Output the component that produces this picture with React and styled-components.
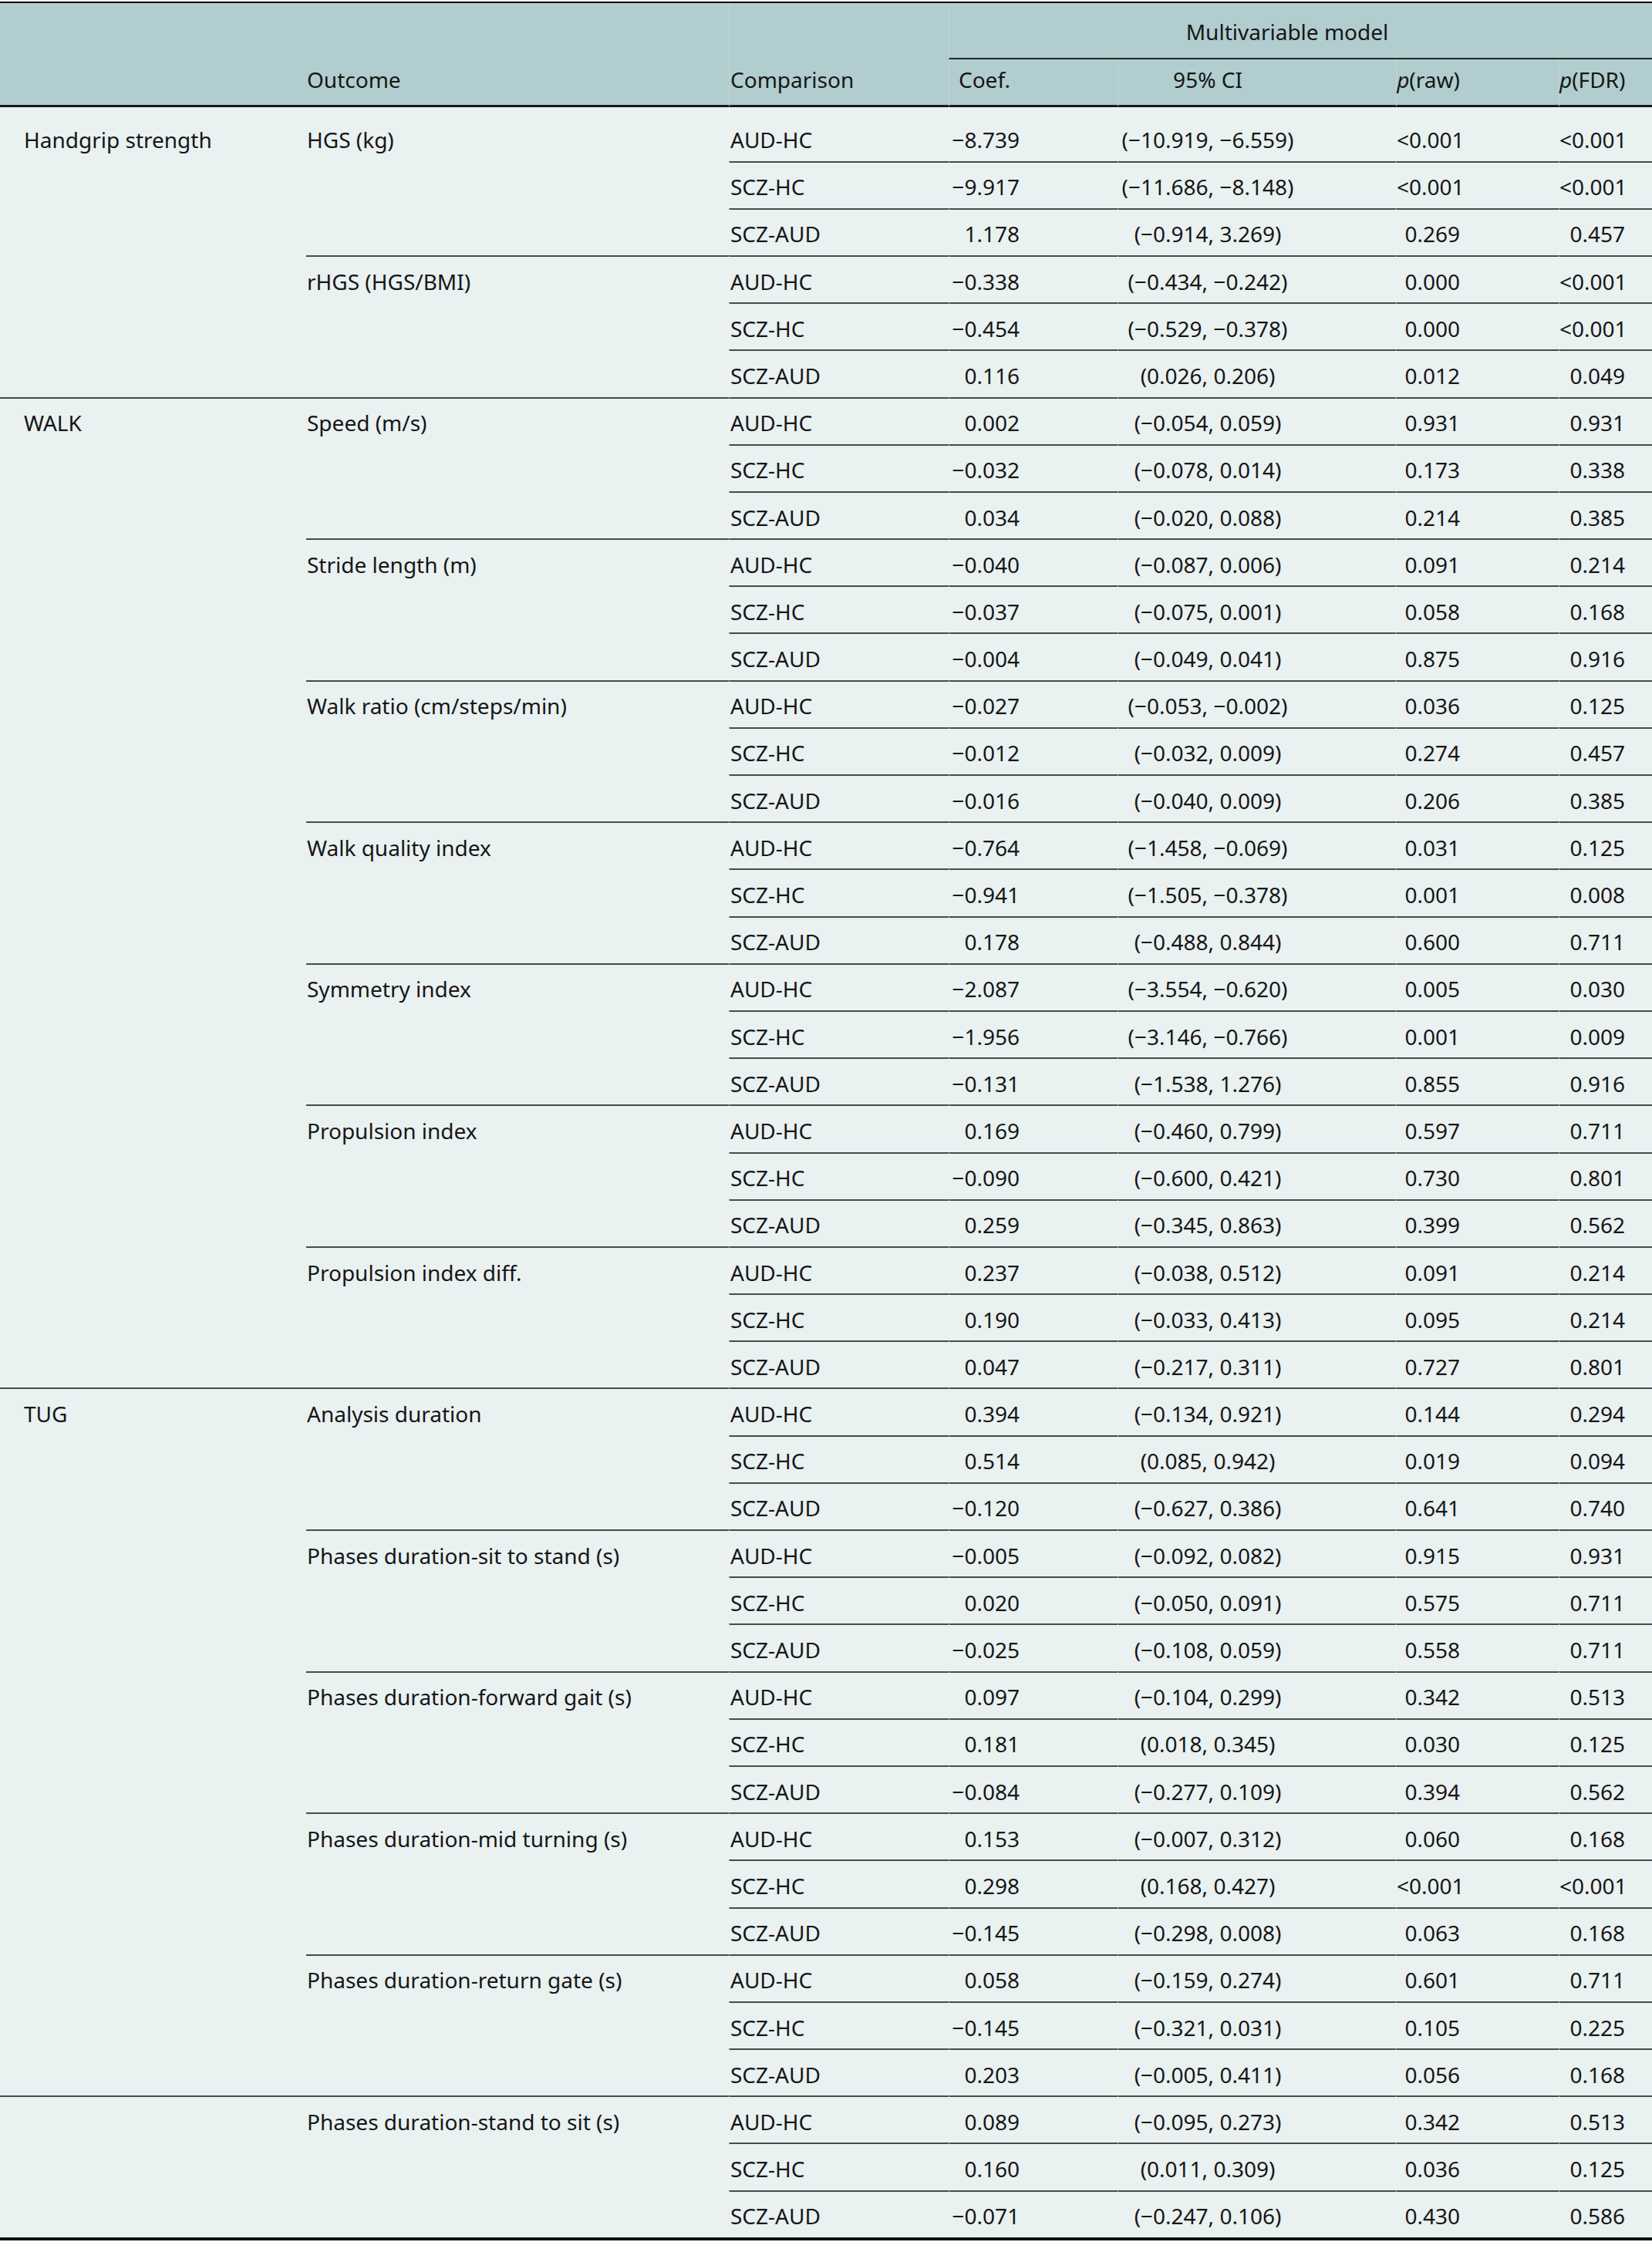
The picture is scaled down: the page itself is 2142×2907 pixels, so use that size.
import React from 'react';
import styled, { createGlobalStyle, css } from 'styled-components';

const GlobalStyle = createGlobalStyle`
  html, body { margin: 0; padding: 0; background: #ffffff; }
  body {
    font-family: "Noto Sans", "Open Sans", "DejaVu Sans", sans-serif;
    color: #161616;
  }
`;

const HEAD_BG = '#b1cdcf';
const BODY_BG = '#e9f1f1';
const RULE = '#4a4a4a';
const FAINT = 'rgba(255,255,255,0.18)';

const Frame = styled.div`
  padding-top: 2px;
  width: 2142px;
`;

const Table = styled.table`
  width: 2142px;
  table-layout: fixed;
  border-collapse: separate;
  border-spacing: 0;
  border-top: 2px solid #0c0c0c;
  border-bottom: 4px solid #111111;
  font-size: 28px;
  line-height: 30px;
`;

const Head = styled.thead`
  background: ${HEAD_BG};
`;

const Body = styled.tbody`
  background: ${BODY_BG};
`;

/* column specification: width, left padding, right padding, alignment */
const COLS = [
  { w: 397, pl: 31, pr: 0, align: 'left', body: 'left' },
  { w: 548, pl: 1, pr: 0, align: 'left', body: 'left' },
  { w: 285, pl: 1, pr: 0, align: 'left', body: 'left' },
  { w: 219, pl: 0, pr: 127, align: 'center', body: 'right' },
  { w: 361, pl: 0, pr: 128, align: 'center', body: 'center' },
  { w: 211, pl: 0, pr: 128, align: 'center', body: 'right' },
  { w: 121, pl: 0, pr: 35, align: 'center', body: 'right' },
];

const colBox = css`
  padding-left: ${(p) => COLS[p.$col].pl}px;
  padding-right: ${(p) => COLS[p.$col].pr}px;
  border-left: ${(p) => (p.$col >= 2 ? `1px solid ${FAINT}` : 'none')};
`;

const HeadGroupCell = styled.th`
  font-weight: 400;
  text-align: center;
  vertical-align: middle;
  padding: 21.5px 35px 19.5px 0;
  border-left: 1px solid ${FAINT};
  border-bottom: 2px solid #262626;
`;

const HeadCell = styled.th`
  ${colBox};
  font-weight: 400;
  text-align: ${(p) => COLS[p.$col].align};
  vertical-align: bottom;
  padding-top: 11px;
  padding-bottom: 18px;
  border-bottom: 3px solid #1a1a1a;
  white-space: nowrap;
`;

const Cell = styled.td`
  ${colBox};
  text-align: ${(p) => COLS[p.$col].body};
  vertical-align: top;
  padding-top: ${(p) => (p.$first ? 27 : 16.6)}px;
  padding-bottom: 12.6px;
  border-top: ${(p) => (p.$first ? 'none' : `2px solid ${RULE}`)};
  white-space: nowrap;
`;

const Ital = styled.i`
  font-style: italic;
`;

const M = '\u2212';
const n = (s) => s.replace(/-/g, M);

const DATA = [
  {
    cat: 'Handgrip strength',
    outcomes: [
      ['HGS (kg)', [
        ['-8.739', '(-10.919, -6.559)', '<0.001', '<0.001'],
        ['-9.917', '(-11.686, -8.148)', '<0.001', '<0.001'],
        ['1.178', '(-0.914, 3.269)', '0.269', '0.457'],
      ]],
      ['rHGS (HGS/BMI)', [
        ['-0.338', '(-0.434, -0.242)', '0.000', '<0.001'],
        ['-0.454', '(-0.529, -0.378)', '0.000', '<0.001'],
        ['0.116', '(0.026, 0.206)', '0.012', '0.049'],
      ]],
    ],
  },
  {
    cat: 'WALK',
    outcomes: [
      ['Speed (m/s)', [
        ['0.002', '(-0.054, 0.059)', '0.931', '0.931'],
        ['-0.032', '(-0.078, 0.014)', '0.173', '0.338'],
        ['0.034', '(-0.020, 0.088)', '0.214', '0.385'],
      ]],
      ['Stride length (m)', [
        ['-0.040', '(-0.087, 0.006)', '0.091', '0.214'],
        ['-0.037', '(-0.075, 0.001)', '0.058', '0.168'],
        ['-0.004', '(-0.049, 0.041)', '0.875', '0.916'],
      ]],
      ['Walk ratio (cm/steps/min)', [
        ['-0.027', '(-0.053, -0.002)', '0.036', '0.125'],
        ['-0.012', '(-0.032, 0.009)', '0.274', '0.457'],
        ['-0.016', '(-0.040, 0.009)', '0.206', '0.385'],
      ]],
      ['Walk quality index', [
        ['-0.764', '(-1.458, -0.069)', '0.031', '0.125'],
        ['-0.941', '(-1.505, -0.378)', '0.001', '0.008'],
        ['0.178', '(-0.488, 0.844)', '0.600', '0.711'],
      ]],
      ['Symmetry index', [
        ['-2.087', '(-3.554, -0.620)', '0.005', '0.030'],
        ['-1.956', '(-3.146, -0.766)', '0.001', '0.009'],
        ['-0.131', '(-1.538, 1.276)', '0.855', '0.916'],
      ]],
      ['Propulsion index', [
        ['0.169', '(-0.460, 0.799)', '0.597', '0.711'],
        ['-0.090', '(-0.600, 0.421)', '0.730', '0.801'],
        ['0.259', '(-0.345, 0.863)', '0.399', '0.562'],
      ]],
      ['Propulsion index diff.', [
        ['0.237', '(-0.038, 0.512)', '0.091', '0.214'],
        ['0.190', '(-0.033, 0.413)', '0.095', '0.214'],
        ['0.047', '(-0.217, 0.311)', '0.727', '0.801'],
      ]],
    ],
  },
  {
    cat: 'TUG',
    outcomes: [
      ['Analysis duration', [
        ['0.394', '(-0.134, 0.921)', '0.144', '0.294'],
        ['0.514', '(0.085, 0.942)', '0.019', '0.094'],
        ['-0.120', '(-0.627, 0.386)', '0.641', '0.740'],
      ]],
      ['Phases duration-sit to stand (s)', [
        ['-0.005', '(-0.092, 0.082)', '0.915', '0.931'],
        ['0.020', '(-0.050, 0.091)', '0.575', '0.711'],
        ['-0.025', '(-0.108, 0.059)', '0.558', '0.711'],
      ]],
      ['Phases duration-forward gait (s)', [
        ['0.097', '(-0.104, 0.299)', '0.342', '0.513'],
        ['0.181', '(0.018, 0.345)', '0.030', '0.125'],
        ['-0.084', '(-0.277, 0.109)', '0.394', '0.562'],
      ]],
      ['Phases duration-mid turning (s)', [
        ['0.153', '(-0.007, 0.312)', '0.060', '0.168'],
        ['0.298', '(0.168, 0.427)', '<0.001', '<0.001'],
        ['-0.145', '(-0.298, 0.008)', '0.063', '0.168'],
      ]],
      ['Phases duration-return gate (s)', [
        ['0.058', '(-0.159, 0.274)', '0.601', '0.711'],
        ['-0.145', '(-0.321, 0.031)', '0.105', '0.225'],
        ['0.203', '(-0.005, 0.411)', '0.056', '0.168'],
      ]],
    ],
  },
  {
    cat: '',
    outcomes: [
      ['Phases duration-stand to sit (s)', [
        ['0.089', '(-0.095, 0.273)', '0.342', '0.513'],
        ['0.160', '(0.011, 0.309)', '0.036', '0.125'],
        ['-0.071', '(-0.247, 0.106)', '0.430', '0.586'],
      ]],
    ],
  },
];

const COMPARISONS = ['AUD-HC', 'SCZ-HC', 'SCZ-AUD'];

function buildRows() {
  const rows = [];
  let first = true;
  DATA.forEach((group, gi) => {
    const catSpan = group.outcomes.length * 3;
    group.outcomes.forEach(([outcome, vals], oi) => {
      vals.forEach((v, ri) => {
        const isFirst = first;
        first = false;
        rows.push(
          <tr key={`${gi}-${oi}-${ri}`}>
            {oi === 0 && ri === 0 && (
              <Cell $col={0} $first={isFirst} rowSpan={catSpan}>
                {group.cat}
              </Cell>
            )}
            {ri === 0 && (
              <Cell $col={1} $first={isFirst} rowSpan={3}>
                {outcome}
              </Cell>
            )}
            <Cell $col={2} $first={isFirst}>{COMPARISONS[ri]}</Cell>
            <Cell $col={3} $first={isFirst}>{n(v[0])}</Cell>
            <Cell $col={4} $first={isFirst}>{n(v[1])}</Cell>
            <Cell $col={5} $first={isFirst}>{v[2]}</Cell>
            <Cell $col={6} $first={isFirst}>{v[3]}</Cell>
          </tr>
        );
      });
    });
  });
  return rows;
}

export default function App() {
  return (
    <>
      <GlobalStyle />
      <Frame>
        <Table>
          <colgroup>
            {COLS.map((c, i) => (
              <col key={i} style={{ width: c.w }} />
            ))}
          </colgroup>
          <Head>
            <tr>
              <HeadCell $col={0} rowSpan={2}></HeadCell>
              <HeadCell $col={1} rowSpan={2}>Outcome</HeadCell>
              <HeadCell $col={2} rowSpan={2}>Comparison</HeadCell>
              <HeadGroupCell colSpan={4}>Multivariable model</HeadGroupCell>
            </tr>
            <tr>
              <HeadCell $col={3}>Coef.</HeadCell>
              <HeadCell $col={4}>95% CI</HeadCell>
              <HeadCell $col={5}>
                <Ital>p</Ital>(raw)
              </HeadCell>
              <HeadCell $col={6}>
                <Ital>p</Ital>(FDR)
              </HeadCell>
            </tr>
          </Head>
          <Body>{buildRows()}</Body>
        </Table>
      </Frame>
    </>
  );
}
